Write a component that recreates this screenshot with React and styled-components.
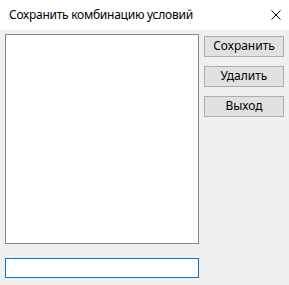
import styled, { createGlobalStyle } from 'styled-components';

const GlobalStyle = createGlobalStyle`
  html, body {
    margin: 0;
    padding: 0;
    background: #f0f0f0;
  }
  body {
    font-family: "Noto Sans", "Open Sans", sans-serif;
    font-size: 12px;
    color: #000;
  }
`;

function CloseIcon() {
  return (
    <svg width="10" height="10" viewBox="0 0 10 10">
      <path d="M0.5 0.5 L9.5 9.5 M9.5 0.5 L0.5 9.5" stroke="#000" strokeWidth="1" fill="none" />
    </svg>
  );
}

function App() {
  const buttons = ['Сохранить', 'Удалить', 'Выход'];

  return (
    <>
      <GlobalStyle />
      <Window>
        <TitleBar>
          <Title>Сохранить комбинацию условий</Title>
          <CloseButton>
            <CloseIcon />
          </CloseButton>
        </TitleBar>
        <Body>
          <LeftColumn>
            <ListBox />
            <TextInput type="text" />
          </LeftColumn>
          <ButtonColumn>
            {buttons.map(label => (
              <Button key={label}>{label}</Button>
            ))}
          </ButtonColumn>
        </Body>
      </Window>
    </>
  );
}

const Window = styled.div`
  width: 289px;
  height: 285px;
  background: #f0f0f0;
  display: flex;
  flex-direction: column;
`;

const TitleBar = styled.div`
  height: 30px;
  background: #fff;
  display: flex;
  align-items: center;
  justify-content: space-between;
  padding-left: 9px;
  box-sizing: border-box;
`;

const Title = styled.span`
  font-size: 12px;
  letter-spacing: -0.25px;
  padding-bottom: 1px;
`;

const CloseButton = styled.div`
  width: 46px;
  height: 30px;
  display: flex;
  align-items: center;
  justify-content: center;
  padding-left: 20px;
  box-sizing: border-box;
`;

const Body = styled.div`
  display: flex;
  padding: 4px 0 0 5px;
`;

const LeftColumn = styled.div`
  display: flex;
  flex-direction: column;
  gap: 14px;
`;

const ListBox = styled.div`
  width: 194px;
  height: 210px;
  box-sizing: border-box;
  background: #fff;
  border: 1px solid #828790;
`;

const TextInput = styled.input`
  width: 194px;
  height: 20px;
  box-sizing: border-box;
  margin: 0;
  padding: 0 3px;
  background: #fff;
  border: 1px solid #0078d7;
  outline: none;
  font: inherit;
`;

const ButtonColumn = styled.div`
  display: flex;
  flex-direction: column;
  gap: 9px;
  margin-left: 5px;
  padding-top: 2px;
`;

const Button = styled.button`
  width: 80px;
  height: 21px;
  box-sizing: border-box;
  margin: 0;
  padding: 0 0 1px;
  background: #e1e1e1;
  border: 1px solid #adadad;
  font-family: inherit;
  font-size: 12px;
  color: #000;
  line-height: 1;
`;

export { App as default };
